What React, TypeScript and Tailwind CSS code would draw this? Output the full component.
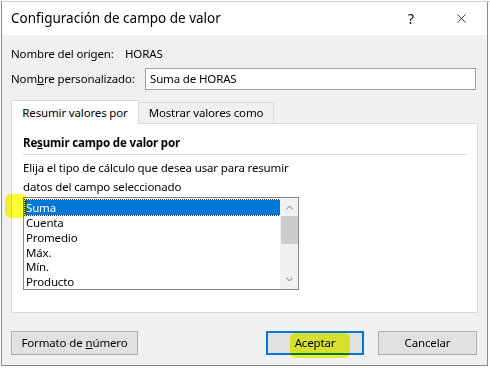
import { ChevronUp, ChevronDown, X } from "lucide-react";

const opciones = ["Suma", "Cuenta", "Promedio", "Máx.", "Mín.", "Producto"];

export default function App() {
  return (
    <div
      className="relative h-[368px] w-[490px] overflow-hidden bg-white text-[11.5px] tracking-[-0.15px] text-black"
      style={{ fontFamily: '"Noto Sans", "Segoe UI", sans-serif' }}
    >
      <div className="h-[2px] border-b border-[#d4d4d4] bg-white" />
      <div className="ml-[1px] flex h-[364px] w-[487px] flex-col border border-t-0 border-[#8a8a8a] bg-[#f0f0f0]">
        {/* barra de título */}
        <div className="flex h-[33px] items-center bg-white pl-[9px]">
          <span className="text-[13.5px] leading-none tracking-normal">Configuración de campo de valor</span>
          <span className="ml-auto mr-[40px] text-[14px]">?</span>
          <X className="mr-[18px] h-[15px] w-[15px]" strokeWidth={1.2} />
        </div>

        <div className="flex flex-col px-[9px] pt-[9px]">
          <div className="flex h-[20px] items-center">
            <span className="w-[114px]">Nombre del origen:</span>
            <span>HORAS</span>
          </div>
          <div className="mt-[4px] flex h-[22px] items-center">
            <span className="w-[134px]">
              Nom<span className="underline">b</span>re personalizado:
            </span>
            <div className="mr-[2px] flex h-[22px] flex-1 items-center border border-[#a0a0a0] bg-white pl-[4px]">
              Suma de HORAS
            </div>
          </div>

          {/* pestañas */}
          <div className="mt-[9px] flex h-[24px] items-end">
            <div className="relative z-10 -mb-px flex h-[24px] w-[128px] items-center justify-center border border-b-0 border-[#d9d9d9] bg-white">
              Resumir valores por
            </div>
            <div className="flex h-[21px] w-[135px] items-center justify-center border border-l-0 border-b-0 border-[#d9d9d9]">
              Mostrar valores como
            </div>
          </div>
          <div className="flex h-[190px] w-[467px] flex-col border border-[#d9d9d9] bg-white px-[11px]">
            <div className="mt-[10px] font-bold">
              Re<span className="underline">s</span>umir campo de valor por
            </div>
            <div className="mt-[3px] h-px bg-[#dcdcdc]" />
            <div className="mt-[3px] leading-[19px]">
              Elija el tipo de cálculo que desea usar para resumir
              <br />
              datos del campo seleccionado
            </div>
            <div className="mt-[1px] flex h-[93px] w-[276px] border border-[#828790] bg-white">
              <div className="flex flex-1 flex-col pl-[1px] pt-[2px]">
                {opciones.map((o, i) => (
                  <div
                    key={o}
                    className={`flex h-[15px] items-center pl-[1px] leading-[13px] ${
                      i === 0 ? "bg-[#0078d7] text-white outline-1 outline-dotted outline-[#333]" : ""
                    }`}
                  >
                    {o}
                  </div>
                ))}
              </div>
              <div className="flex w-[18px] flex-col items-center bg-[#f0f0f0]">
                <ChevronUp className="mt-[4px] h-[11px] w-[11px] text-[#606060]" strokeWidth={2} />
                <div className="mt-[3px] h-[28px] w-[17px] bg-[#cdcdcd]" />
                <ChevronDown className="mb-[4px] mt-auto h-[11px] w-[11px] text-[#606060]" strokeWidth={2} />
              </div>
            </div>
          </div>

          {/* botones */}
          <div className="mt-[18px] flex h-[24px]">
            <div className="flex w-[127px] items-center justify-center border border-[#adadad] bg-[#e1e1e1]">
              Formato de <span className="ml-[3px] underline">n</span>úmero
            </div>
            <div className="ml-auto flex w-[98px] items-center justify-center border-2 border-[#0078d7] bg-[#e1e1e1]">
              Aceptar
            </div>
            <div className="ml-[14px] mr-[1px] flex w-[99px] items-center justify-center border border-[#adadad] bg-[#e1e1e1]">
              Cancelar
            </div>
          </div>
        </div>
      </div>

      {/* marcas de resaltador */}
      <div className="pointer-events-none absolute left-[5px] top-[194px] h-[24px] w-[22px] rounded-[6px] bg-[#ffff00] opacity-80 mix-blend-multiply" />
      <div className="pointer-events-none absolute left-[290px] top-[333px] h-[25px] w-[60px] rounded-[5px] bg-[#f2ff00] opacity-80 mix-blend-multiply" />
    </div>
  );
}
